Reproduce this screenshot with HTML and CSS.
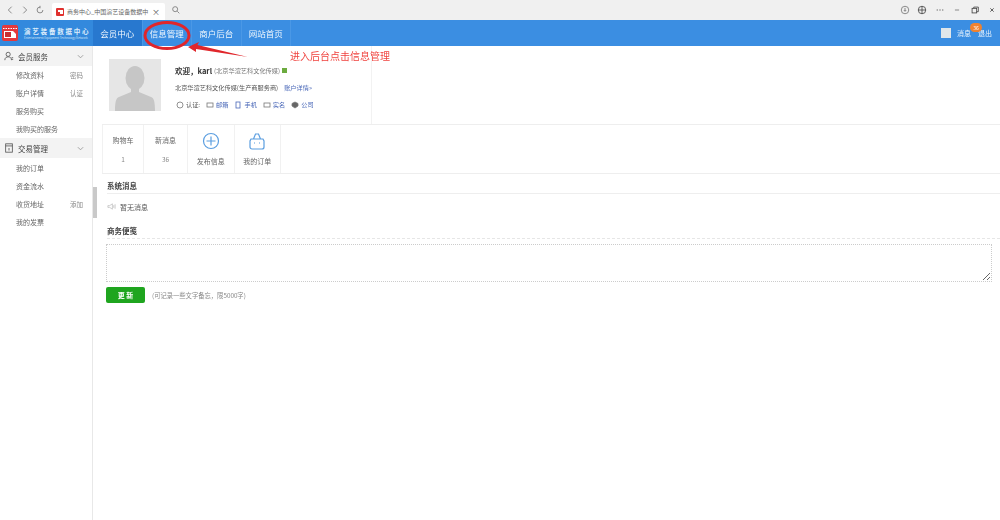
FILE: index.html
```html
<!DOCTYPE html>
<html lang="zh">
<head>
<meta charset="utf-8">
<title>商务中心</title>
<link rel="stylesheet" href="styles.css">
</head>
<body>
<div class="page">
  <div class="chrome">
    <div class="chrome-nav">
      <svg class="chrome-ic" viewBox="0 0 12 12"><path d="M8 2 4 6l4 4" /></svg>
      <svg class="chrome-ic" viewBox="0 0 12 12"><path d="M4 2l4 4-4 4" /></svg>
      <svg class="chrome-ic" viewBox="0 0 12 12"><path d="M9.500 6A3.500 3.500 0 1 1 6 2.500M6 1v3" /></svg>
    </div>
    <div class="tab">
      <svg class="tab-logo" viewBox="0 0 8 8"><rect width="8" height="8" rx="1" fill="#e0312f"/><path d="M2 2h5v4H4V4H2z" fill="#fff"/></svg>
      <span class="tab-title">商务中心_中国演艺设备数据中</span>
      <span class="tab-close">×</span>
    </div>
    <svg class="chrome-ic search" viewBox="0 0 12 12"><circle cx="5" cy="5" r="3"/><path d="M7.500 7.500 10 10"/></svg>
    <div class="chrome-right">
      <svg class="chrome-ic" viewBox="0 0 12 12"><circle cx="6" cy="6" r="4.500"/><path d="M6 3.500v4M4.500 6 6 7.500 7.500 6"/></svg>
      <svg class="chrome-ic dark" viewBox="0 0 12 12"><circle cx="6" cy="6" r="4.500"/><path d="M1.500 6h9M6 1.500v9"/></svg>
      <svg class="chrome-ic dark" viewBox="0 0 12 12"><path d="M2 6h1.500M5.250 6h1.500M8.500 6H10"/></svg>
      <svg class="chrome-ic" viewBox="0 0 12 12"><path d="M3.500 6h5"/></svg>
      <svg class="chrome-ic dark" viewBox="0 0 12 12"><rect x="2.500" y="4" width="5.500" height="5.500"/><path d="M4.500 4V2.500H10V8H8"/></svg>
      <svg class="chrome-ic dark" viewBox="0 0 12 12"><path d="M4 4l4 4M8 4l-4 4"/></svg>
    </div>
  </div>

  <header class="topbar">
    <div class="brand">
      <svg class="brand-logo" viewBox="0 0 16 16"><rect width="16" height="16" rx="2" fill="#e5383b"/><path d="M1 3.500h14" stroke="#fff" stroke-dasharray="1.500 1" stroke-width="1"/><path d="M2 6h9l3 3v4H2z" fill="#fff"/><path d="M3 7h6v5H3z" fill="#c92f33"/></svg>
      <div class="brand-text">
        <div class="brand-cn">演艺装备数据中心</div>
        <div class="brand-en">Entertainment Equipment Technology Network</div>
      </div>
    </div>
    <nav class="topnav">
      <a class="topnav-item active">会员中心</a>
      <a class="topnav-item">信息管理</a>
      <a class="topnav-item">商户后台</a>
      <a class="topnav-item">网站首页</a>
    </nav>
    <div class="top-user">
      <span class="user-thumb"></span>
      <span class="user-link msg">消息<em class="badge">36</em></span>
      <span class="user-link">退出</span>
    </div>
  </header>

  <div class="body">
    <aside class="sidebar">
      <div class="side-head">
        <svg class="side-ic" viewBox="0 0 12 12"><circle cx="5" cy="4" r="2.500"/><path d="M1 11c0-3 2-4 4-4s4 1 4 4M9 8h2M9 10h2"/></svg>
        <span>会员服务</span>
        <svg class="caret" viewBox="0 0 8 8"><path d="M1 2.500 4 5.500 7 2.500"/></svg>
      </div>
      <a class="side-item"><span>修改资料</span><i>密码</i></a>
      <a class="side-item"><span>账户详情</span><i>认证</i></a>
      <a class="side-item"><span>服务购买</span></a>
      <a class="side-item"><span>我购买的服务</span></a>
      <div class="side-head trade">
        <svg class="side-ic" viewBox="0 0 12 12"><rect x="2" y="1" width="8" height="10"/><path d="M2 3.500h8M6 6v3"/></svg>
        <span>交易管理</span>
        <svg class="caret" viewBox="0 0 8 8"><path d="M1 2.500 4 5.500 7 2.500"/></svg>
      </div>
      <a class="side-item"><span>我的订单</span></a>
      <a class="side-item"><span>资金流水</span></a>
      <a class="side-item"><span>收货地址</span><i>添加</i></a>
      <a class="side-item"><span>我的发票</span></a>
      <div class="splitter"></div>
    </aside>

    <main class="main">
      <section class="profile">
        <div class="avatar">
          <svg viewBox="0 0 52 52"><ellipse cx="26" cy="19" rx="9.500" ry="12" fill="#c6c6c6"/><path d="M22 28h8v5l12 5c3 1 4 5 4 14H6c0-9 1-13 4-14l12-5z" fill="#c6c6c6"/></svg>
        </div>
        <div class="info">
          <div class="info-line"><b>欢迎，karl</b><span class="muted">(北京华渲艺科文化传媒)</span><span class="vip"></span></div>
          <div class="info-line"><span>北京华渲艺科文化传媒(生产商服务商)</span><a class="link detail">账户详情»</a></div>
          <div class="info-line certs">
            <span class="cert"><svg class="cert-ic" viewBox="0 0 8 8"><circle cx="4" cy="4" r="3"/></svg>认证:</span>
            <span class="cert"><svg class="cert-ic" viewBox="0 0 8 8"><rect x="1" y="2" width="6" height="4"/></svg><a class="link">邮箱</a></span>
            <span class="cert"><svg class="cert-ic blue" viewBox="0 0 8 8"><rect x="2" y="1" width="4" height="6"/></svg><a class="link">手机</a></span>
            <span class="cert"><svg class="cert-ic" viewBox="0 0 8 8"><rect x="1" y="2" width="6" height="4"/></svg><a class="link">实名</a></span>
            <span class="cert"><svg class="cert-ic solid" viewBox="0 0 8 8"><path d="M4 1 7 2.500V5L4 7 1 5V2.500z"/></svg><a class="link">公司</a></span>
          </div>
        </div>
      </section>

      <section class="stats">
        <div class="stat count first"><span>购物车</span><span class="num">1</span></div>
        <div class="stat count second"><span>新消息</span><span class="num">36</span></div>
        <div class="stat action">
          <svg class="stat-ic" viewBox="0 0 20 20"><circle cx="10" cy="10" r="7.500"/><path d="M10 5.500v9M5.500 10h9"/></svg>
          <span>发布信息</span>
        </div>
        <div class="stat action">
          <svg class="stat-ic" viewBox="0 0 20 20"><path d="M4 8h12l1 2v6a2 2 0 0 1-2 2H5a2 2 0 0 1-2-2v-6zM6.500 8l2-5h3l2 5M7 12h1M12 12h1"/></svg>
          <span>我的订单</span>
        </div>
      </section>

      <h3 class="sec-title">系统消息</h3>
      <div class="notice">
        <svg class="speaker" viewBox="0 0 10 10"><path d="M1 4h2l3-2v6L3 6H1zM7.500 3.500v3M9 2.500v5"/></svg>
        <span>暂无消息</span>
      </div>

      <h3 class="sec-title memo-title">商务便笺</h3>
      <div class="memo">
        <textarea class="memo-box"></textarea>
        <div class="memo-foot">
          <button class="save">更 新</button>
          <span class="hint">(可记录一些文字备忘，限5000字)</span>
        </div>
      </div>
    </main>
  </div>

  <svg class="annot-svg" viewBox="0 0 1000 520">
    <ellipse cx="167" cy="35.500" rx="22" ry="13" />
    <path class="arrow" d="M188 47 199 42 197.500 45 248 57 196 49 196 52z"/>
  </svg>
  <div class="annot-text">进入后台点击信息管理</div>
</div>
</body>
</html>
```

FILE: styles.css
```css
* { box-sizing: border-box; }
html, body { margin: 0; padding: 0; }
body {
  background: #fff;
  color: #555;
  font-family: "Noto Sans CJK SC", "Liberation Sans", sans-serif;
  font-size: 7px;
  overflow: hidden;
}
.page { position: relative; width: 1000px; height: 520px; display: flex; flex-direction: column; overflow: hidden; filter: blur(0.35px); }

.chrome { height: 20px; background: #f0f0f0; display: flex; align-items: center; padding-left: 5px; flex: none; }
.chrome-nav { display: flex; gap: 5px; width: 47px; margin-top: -1px; }
.chrome-ic { width: 10px; height: 10px; fill: none; stroke: #777; stroke-width: 1; flex: none; }
.chrome-ic.dark { stroke: #444; }
.tab { width: 113px; height: 17px; margin-top: 3px; background: #fff; display: flex; align-items: center; padding: 0 5px 0 4px; gap: 3px; border-radius: 2px 2px 0 0; }
.tab-logo { width: 8px; height: 8px; flex: none; }
.tab-title { font-size: 6px; color: #666; white-space: nowrap; overflow: hidden; flex: 1; }
.tab-close { font-size: 8px; line-height: 1; color: #555; flex: none; }
.search { margin-left: 6px; margin-top: -1px; }
.chrome-right { margin-left: auto; display: flex; align-items: center; gap: 7.400px; padding-right: 3px; margin-top: -1px; }

.topbar { height: 26px; background: #3b8ee2; display: flex; align-items: stretch; color: #fff; flex: none; }
.brand { width: 93px; background: #3389dd; display: flex; align-items: center; gap: 6px; padding-left: 2px; overflow: hidden; }
.brand-logo { width: 16px; height: 16px; flex: none; }
.brand-cn { font-family: "Noto Sans CJK SC", sans-serif; font-size: 6.500px; font-weight: 700; letter-spacing: 1.800px; line-height: 9px; color: #dcecfb; white-space: nowrap; }
.brand-en { font-size: 2.900px; line-height: 4px; color: #cfe3f7; white-space: nowrap; }
.topnav { display: flex; }
.topnav-item { width: 49.500px; display: flex; align-items: center; justify-content: center; font-size: 8.500px; color: #eef6fd; border-right: 1px solid #4a98e6; }
.topnav-item.active { background: #2878cf; }
.top-user { margin-left: auto; display: flex; align-items: center; padding-right: 8px; font-size: 7px; }
.user-thumb { width: 10px; height: 10px; background: #dfe6ea; margin-right: 6px; }
.user-link { color: #eaf4fd; white-space: nowrap; }
.msg { position: relative; margin-right: 7px; }
.badge { position: absolute; left: 13px; top: -5px; width: 12px; height: 9px; border-radius: 6px; background: #f0822f; color: #fff; font-size: 5px; line-height: 9px; text-align: center; font-style: normal; }

.body { flex: 1; display: flex; min-height: 0; }
.sidebar { position: relative; width: 93px; border-right: 1px solid #e8e8e8; flex: none; }
.side-head { height: 20px; background: #f3f3f3; display: flex; align-items: center; padding: 0 8px 0 4px; font-size: 7.500px; color: #444; }
.side-head.trade { margin-bottom: 1px; }
.side-head span { margin-left: 4px; flex: 1; }
.side-ic { width: 10px; height: 10px; fill: none; stroke: #555; stroke-width: 1; }
.caret { width: 7px; height: 7px; fill: none; stroke: #999; stroke-width: 1; }
.side-item { height: 18px; display: flex; align-items: center; justify-content: space-between; padding: 0 9px 0 16px; font-size: 7px; color: #666; }
.side-item i { font-style: normal; font-size: 6.500px; color: #888; }
.splitter { position: absolute; right: -5px; top: 141px; width: 4px; height: 31px; background: #c9c9c9; }

.main { flex: 1; min-width: 0; }
.profile { height: 78px; width: 279px; padding: 13px 0 0 16px; display: flex; border-right: 1px solid #f2f2f2; }
.avatar { width: 52px; height: 52px; background: #e6e6e6; flex: none; overflow: hidden; }
.avatar svg { display: block; width: 52px; height: 52px; }
.info { margin-left: 14px; padding-top: 3px; }
.info-line { height: 17px; display: flex; align-items: center; font-size: 6.200px; color: #555; white-space: nowrap; }
.info-line b { font-size: 7.500px; color: #333; margin-right: 2px; }
.muted { color: #777; font-size: 6.200px; }
.vip { width: 5px; height: 5px; background: #6cab3f; margin-left: 2px; }
.link { color: #4a68b8; }
.detail { margin-left: 6px; }
.certs { gap: 6px; padding-left: 1px; }
.cert { display: inline-flex; align-items: center; gap: 2px; }
.cert-ic { width: 8px; height: 8px; fill: none; stroke: #777; stroke-width: .8; }
.cert-ic.blue { stroke: #4a68b8; }
.cert-ic.solid { fill: #666; }

.stats { height: 50px; margin-left: 9px; display: flex; border-top: 1px solid #eee; border-bottom: 1px solid #eee; }
.stat { display: flex; flex-direction: column; align-items: center; font-size: 7px; color: #666; border-right: 1px solid #f1f1f1; }
.stat.count { padding-top: 10px; gap: 9px; }
.stat.first { width: 42px; border-left: 1px solid #f1f1f1; }
.stat.second { width: 44px; }
.stat.action { padding-top: 6px; gap: 5px; width: 46.500px; }
.num { color: #888; font-size: 6.500px; }
.stat-ic { width: 20px; height: 20px; fill: none; stroke: #5b9ee0; stroke-width: 1.200; }

.sec-title { margin: 4px 0 0 14px; height: 16px; font-size: 7.500px; font-weight: 700; color: #444; line-height: 16px; border-bottom: 1px solid #eee; }
.notice { height: 29px; margin-left: 14px; padding-top: 8px; display: flex; align-items: flex-start; gap: 4px; font-size: 7px; color: #555; }
.speaker { width: 9px; height: 9px; fill: none; stroke: #bbb; stroke-width: .8; }
.memo-title { margin-top: 0; border-bottom: 1px dashed #e6e6e6; }
.memo { margin: 0 8px 0 13px; padding-top: 5px; }
.memo-box { display: block; width: 100%; height: 38px; border: 1px dotted #ccc; background: #fff; margin: 0; }
.memo-foot { display: flex; align-items: center; margin-top: 5px; gap: 7px; }
.save { width: 39px; height: 16px; border: 0; border-radius: 2px; padding: 0; background: #1fa51f; color: #fff; font: 700 7px "Noto Sans CJK SC", sans-serif; }
.hint { font-size: 6.300px; color: #888; }

.annot-svg { position: absolute; left: 0; top: 0; width: 1000px; height: 520px; pointer-events: none; }
.annot-svg ellipse { fill: none; stroke: #e0262b; stroke-width: 3; }
.annot-svg .arrow { fill: #e0262b; }
.annot-text { position: absolute; left: 290px; top: 49px; font-size: 10px; line-height: 14px; color: #f0433f; white-space: nowrap; }
```
